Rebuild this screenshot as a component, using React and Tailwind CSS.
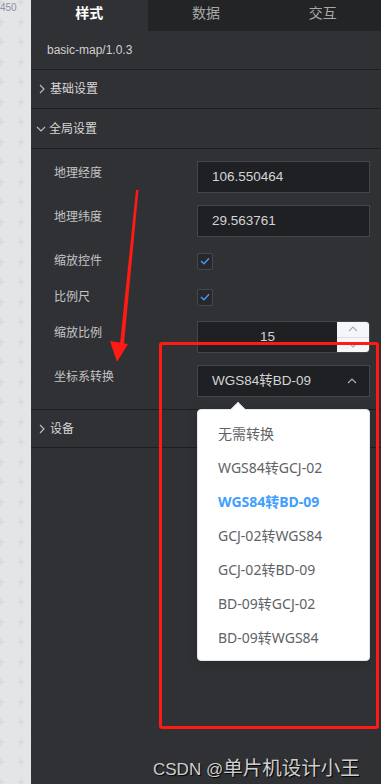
import React from "react";

const FONT = { fontFamily: '"Liberation Sans", "Noto Sans CJK SC", sans-serif' };
const YAHEI = { fontFamily: '"Noto Sans", "Noto Sans CJK SC", sans-serif' };

function Chevron({ dir = "right", className = "" }) {
  const d = dir === "right" ? "M3 1 L7 5 L3 9" : dir === "down" ? "M1 3 L5 7 L9 3" : "M1 7 L5 3 L9 7";
  return (
    <svg width="10" height="10" viewBox="0 0 10 10" className={className}>
      <path d={d} fill="none" stroke="currentColor" strokeWidth="1.1" />
    </svg>
  );
}

function Check() {
  return (
    <div className="w-[16px] h-[17px] rounded-[2px] border border-[#46474c] bg-[#27282b] flex items-center justify-center">
      <svg width="10" height="8" viewBox="0 0 10 8">
        <path d="M1 4 L4 6.8 L9 1.2" fill="none" stroke="#409eff" strokeWidth="1.3" />
      </svg>
    </div>
  );
}

function Label({ children }) {
  return <div className="w-[143px] shrink-0 text-[12px] leading-[24px] text-[#c4c4c4]">{children}</div>;
}

export default function App() {
  const items = ["无需转换", "WGS84转GCJ-02", "WGS84转BD-09", "GCJ-02转WGS84", "GCJ-02转BD-09", "BD-09转GCJ-02", "BD-09转WGS84"];
  return (
    <div className="relative flex w-[381px] h-[784px] overflow-hidden bg-[#303135]" style={FONT}>
      {/* left canvas strip */}
      <div className="relative w-[31px] shrink-0 bg-[#e4e5e7] overflow-hidden">
        <svg width="31" height="784" className="block">
          <defs>
            <pattern id="plus" x="-3" y="-2" width="20" height="20" patternUnits="userSpaceOnUse">
              <path d="M4 0.5 V7.5 M0.5 4 H7.5" stroke="#d5d6d9" strokeWidth="1.2" />
            </pattern>
          </defs>
          <rect width="31" height="784" fill="url(#plus)" />
        </svg>
        <div className="absolute left-0 top-[2px] text-[10px] leading-[12px] text-[#8592a4]">450</div>
      </div>

      {/* panel */}
      <div className="flex-1 flex flex-col">
        <div className="grid grid-cols-3 h-[31px] text-[14px]">
          <div className="flex items-center justify-center pb-[4px] bg-[#303135] text-white font-bold">样式</div>
          <div className="flex items-center justify-center pb-[4px] bg-[#232426] text-[#a8a8a8]">数据</div>
          <div className="flex items-center justify-center pb-[4px] bg-[#232426] text-[#a8a8a8]">交互</div>
        </div>

        <div className="h-[39px] border-b border-[#1e1f21] flex items-center pl-[16px] text-[12px] text-[#d0d0d0]">
          basic-map/1.0.3
        </div>
        <div className="h-[39px] border-b border-[#1e1f21] flex items-center pl-[6px] text-[12px] text-[#d6d6d6]">
          <Chevron dir="right" className="text-[#c0c0c0] mr-[3px]" />
          基础设置
        </div>
        <div className="h-[40px] border-b border-[#1e1f21] flex items-center pl-[5px] text-[12px] text-[#d6d6d6]">
          <Chevron dir="down" className="text-[#c0c0c0] mr-[3px]" />
          全局设置
        </div>

        <div className="flex flex-col gap-[12px] pt-[12px] pb-[12px] pl-[23px] pr-[11px] border-b border-[#1e1f21]">
          <div className="flex items-start">
            <Label>地理经度</Label>
            <div className="flex-1 h-[32px] border border-[#45464a] bg-[#1f2023] flex items-center pl-[14px] text-[13.5px] text-[#d4d4d4]">
              106.550464
            </div>
          </div>
          <div className="flex items-start">
            <Label>地理纬度</Label>
            <div className="flex-1 h-[32px] border border-[#45464a] bg-[#1f2023] flex items-center pl-[14px] text-[13.5px] text-[#d4d4d4]">
              29.563761
            </div>
          </div>
          <div className="flex items-center h-[24px]">
            <Label>缩放控件</Label>
            <Check />
          </div>
          <div className="flex items-center h-[24px]">
            <Label>比例尺</Label>
            <Check />
          </div>
          <div className="flex items-start">
            <Label>缩放比例</Label>
            <div className="flex-1 h-[32px] border border-[#45464a] bg-[#1f2023] flex rounded-r-[4px] overflow-hidden">
              <div className="flex-1 flex items-center justify-center text-[13.5px] text-[#d4d4d4]">15</div>
              <div className="w-[32px] bg-[#f5f6fa] flex flex-col text-[#a8abb2]">
                <div className="flex-1 flex items-center justify-center border-b border-[#dcdfe6]">
                  <Chevron dir="up" />
                </div>
                <div className="flex-1 flex items-center justify-center">
                  <Chevron dir="down" />
                </div>
              </div>
            </div>
          </div>
          <div className="flex items-start">
            <Label>坐标系转换</Label>
            <div className="relative flex-1 h-[32px] border border-[#45464a] bg-[#1f2023] flex items-center justify-between pl-[14px] pr-[12px] text-[13.5px] text-[#d4d4d4]">
              <span>WGS84转BD-09</span>
              <Chevron dir="up" className="text-[#b0b0b0]" />
              {/* dropdown */}
              <div
                className="absolute left-[-1px] right-[-1px] top-[43px] z-10 bg-white rounded-[4px] border border-[#e4e7ed] shadow-[0_2px_12px_rgba(0,0,0,0.12)] py-[6px]"
                style={YAHEI}
              >
                <div className="absolute top-[-6px] left-[35px] w-[10px] h-[10px] bg-white rotate-45 border-l border-t border-[#e4e7ed]" />
                {items.map((t) => (
                  <div
                    key={t}
                    className={
                      t === "WGS84转BD-09"
                        ? "h-[34px] flex items-center pl-[20px] text-[14px] text-[#409eff] font-bold"
                        : "h-[34px] flex items-center pl-[20px] text-[14px] text-[#606266]"
                    }
                  >
                    {t}
                  </div>
                ))}
              </div>
            </div>
          </div>
        </div>

        <div className="h-[38px] border-b border-[#1e1f21] flex items-center pl-[6px] text-[12px] text-[#d6d6d6]">
          <Chevron dir="right" className="text-[#c0c0c0] mr-[3px]" />
          设备
        </div>
      </div>

      {/* annotations */}
      <svg className="absolute left-0 top-0 pointer-events-none z-20" width="381" height="784">
        <polygon points="136,190 138.5,190 124,344 120,344" fill="#ff1a14" />
        <polygon points="110,341 128,344 117,362" fill="#ff1a14" />
      </svg>
      <div className="absolute left-[159px] top-[342px] w-[220px] h-[387px] border-[3px] border-[#ff1a14] rounded-[3px] z-20 pointer-events-none" />

      <div className="absolute left-[153px] top-[752px] flex items-baseline whitespace-nowrap text-[#cfcfcf] z-20 [text-shadow:1px_1px_1px_#000]">
        <span className="text-[17px] whitespace-pre" style={{ fontFamily: '"Liberation Sans", sans-serif' }}>CSDN @</span>
        <span className="text-[19.5px]" style={{ fontFamily: '"Noto Sans CJK SC", sans-serif' }}>单片机设计小王</span>
      </div>
    </div>
  );
}
